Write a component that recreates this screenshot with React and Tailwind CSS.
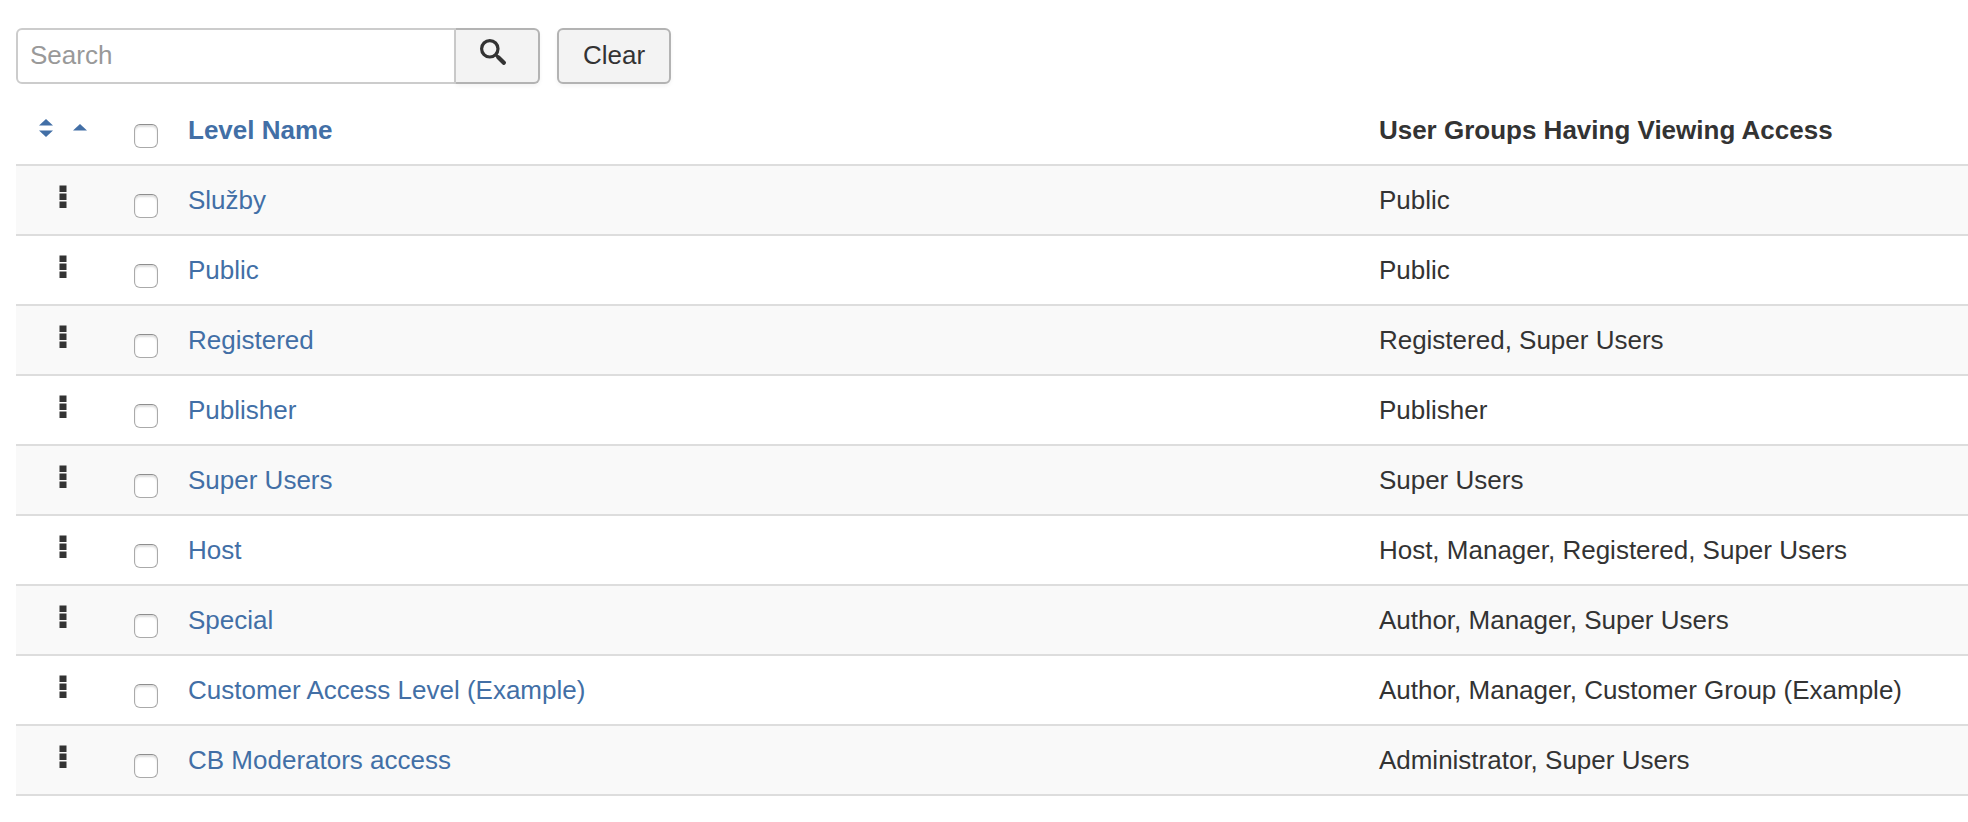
import { useState } from "react";

const levels = [
  { name: "Služby", groups: "Public" },
  { name: "Public", groups: "Public" },
  { name: "Registered", groups: "Registered, Super Users" },
  { name: "Publisher", groups: "Publisher" },
  { name: "Super Users", groups: "Super Users" },
  { name: "Host", groups: "Host, Manager, Registered, Super Users" },
  { name: "Special", groups: "Author, Manager, Super Users" },
  {
    name: "Customer Access Level (Example)",
    groups: "Author, Manager, Customer Group (Example)",
  },
  { name: "CB Moderators access", groups: "Administrator, Super Users" },
];

function SearchIcon() {
  return (
    <svg viewBox="0 0 26 26" className="h-[26px] w-[26px]" aria-hidden="true">
      <circle cx="9.8" cy="9.8" r="8.2" fill="none" stroke="#333" strokeWidth="3.2" />
      <path d="M15.5 15.5L18 18" stroke="#333" strokeWidth="3" />
      <path d="M18.5 18.5L23.8 23.8" stroke="#333" strokeWidth="4.2" strokeLinecap="round" />
    </svg>
  );
}

function SortIcon() {
  return (
    <svg viewBox="0 0 14 18" className="h-[18px] w-[14px] fill-current" aria-hidden="true">
      <path d="M0 6.5L7 0L14 6.5Z" />
      <path d="M0 11.5H14L7 18Z" />
    </svg>
  );
}

function CaretUp() {
  return (
    <svg viewBox="0 0 14 18" className="h-[18px] w-[14px] fill-current" aria-hidden="true">
      <path d="M0 11.5L7 5L14 11.5Z" />
    </svg>
  );
}

// Drag handle, three stacked squares
function Handle() {
  return (
    <svg viewBox="0 0 8 24" className="mx-auto mb-1.5 h-6 w-2 fill-[#333]" aria-hidden="true">
      <rect x="0.5" y="0.5" width="7" height="6.5" />
      <rect x="0.5" y="8.5" width="7" height="6.5" />
      <rect x="0.5" y="16.5" width="7" height="6.5" />
    </svg>
  );
}

function Checkbox({ label, checked, onChange }) {
  return (
    <input
      type="checkbox"
      aria-label={label}
      checked={checked}
      onChange={onChange}
      className="mt-3 block h-6 w-6 appearance-none rounded-md border border-[#aaa] border-t-[#8e8e8e] bg-white shadow-[inset_0_2px_2px_#dedede] checked:bg-[#426fa6]"
    />
  );
}

function App() {
  const [search, setSearch] = useState("");
  const [selected, setSelected] = useState([]);

  const toggle = (name) => {
    setSelected((prev) =>
      prev.includes(name) ? prev.filter((n) => n !== name) : [...prev, name]
    );
  };

  const toggleAll = () => {
    setSelected(selected.length === levels.length ? [] : levels.map((l) => l.name));
  };

  return (
    <div className="min-h-screen bg-white pt-7 pl-4 font-['Liberation_Sans',Arial,sans-serif] text-[26px] leading-9 text-[#333]">
      <form className="flex" onSubmit={(e) => e.preventDefault()}>
        <input
          type="text"
          aria-label="Search"
          placeholder="Search"
          value={search}
          onChange={(e) => setSearch(e.target.value)}
          className="h-14 w-[440px] rounded-l-md border-2 border-[#ccc] px-3 pb-0.5 placeholder:text-[#999]"
        />
        <button
          type="submit"
          aria-label="Search"
          className="flex h-14 w-[84px] justify-center rounded-r-md border-2 border-l-0 border-[#b3b3b3] bg-[#f3f3f3] pt-[9px] pr-2 shadow-[0_2px_4px_rgba(0,0,0,0.05)]"
        >
          <SearchIcon />
        </button>
        <button
          type="button"
          onClick={() => setSearch("")}
          className="ml-[17px] h-14 rounded-md border-2 border-[#b3b3b3] bg-[#f3f3f3] px-6 pb-0.5 shadow-[0_2px_4px_rgba(0,0,0,0.05)]"
        >
          Clear
        </button>
      </form>

      <table className="mt-3 w-full table-fixed border-collapse text-left">
        <thead>
          <tr className="h-[69px]">
            <th className="w-[94px]">
              <a href="#" aria-label="Ordering" className="mb-1 flex justify-center gap-5 text-[#426fa6]">
                <SortIcon />
                <CaretUp />
              </a>
            </th>
            <th className="w-[62px] pl-6">
              <Checkbox
                label="Check all"
                checked={selected.length === levels.length}
                onChange={toggleAll}
              />
            </th>
            <th className="px-4 font-bold">
              <a href="#" className="text-[#426fa6]">
                Level Name
              </a>
            </th>
            <th className="w-[31%] px-4 font-bold">User Groups Having Viewing Access</th>
          </tr>
        </thead>
        <tbody>
          {levels.map((level) => (
            <tr
              key={level.name}
              className="h-[70px] border-y-2 border-[#ddd] odd:bg-[#f9f9f9]"
            >
              <td>
                <Handle />
              </td>
              <td className="pl-6">
                <Checkbox
                  label={level.name}
                  checked={selected.includes(level.name)}
                  onChange={() => toggle(level.name)}
                />
              </td>
              <td className="px-4">
                <a href="#" className="text-[#426fa6]">
                  {level.name}
                </a>
              </td>
              <td className="px-4">{level.groups}</td>
            </tr>
          ))}
        </tbody>
      </table>
    </div>
  );
}

export default App;
